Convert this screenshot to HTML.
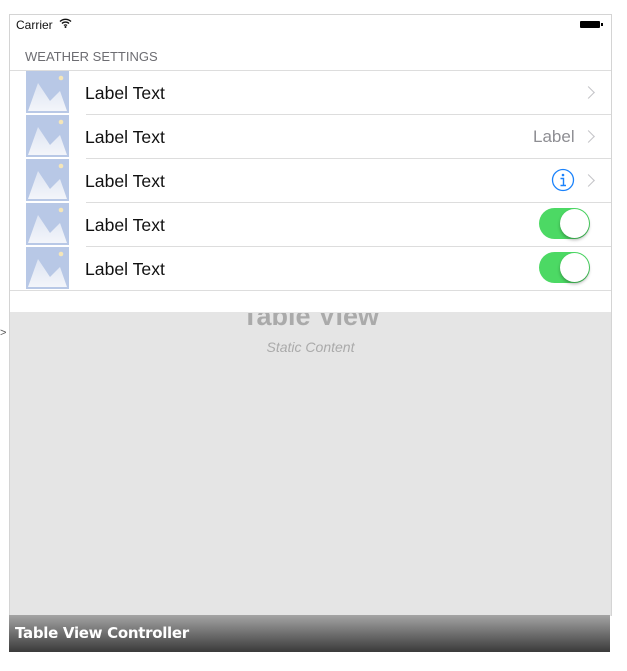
<!DOCTYPE html>
<html><head><style>
body{margin:0;width:627px;height:671px;background:#fff;position:relative;overflow:hidden;font-family:"Liberation Sans",sans-serif}
.frame{position:absolute;left:9px;top:14px;width:601px;height:601px;border:1px solid #d4d4d4;border-bottom:none;background:#e5e5e5;overflow:hidden}
.in{position:absolute;left:0;top:-1px;width:601px;height:602px}
.white{position:absolute;left:0;top:0;width:601px;height:298px;background:#fff}
.abs{position:absolute}
.sep{position:absolute;height:1px;background:#ddd;right:0}
.lbl{position:absolute;left:75px;font-size:17.6px;color:#111}
.img{position:absolute;left:16px;width:43px;height:42px}
.chev{position:absolute;left:574px;width:8px;height:8px;border-right:1.8px solid #c4c4c8;border-top:1.8px solid #c4c4c8;transform:rotate(45deg)}
.tog{position:absolute;left:529px;width:51px;height:31px;border-radius:16px;background:#4cd964}
.tog div{position:absolute;right:1px;top:1px;width:29px;height:29px;border-radius:50%;background:#fff;box-shadow:0 2px 3px rgba(0,0,0,.3)}
.bar{position:absolute;left:9px;top:615px;width:601px;height:37px;background:linear-gradient(#a4a4a4,#3a3a3a);color:#fff;font-weight:bold;font-size:15px;line-height:37px;padding-left:6px;box-sizing:border-box;font-family:"DejaVu Sans",sans-serif;letter-spacing:-0.3px}
</style></head><body>
<div class="frame"><div class="in">
<div class="white"></div>
<div class="abs" style="left:6px;top:4px;font-size:12px;color:#111">Carrier</div>
<svg class="abs" style="left:49px;top:4px" width="13" height="10" viewBox="0 0 13 10"><path d="M1 3.5a8 8 0 0 1 11 0M3 5.5a5 5 0 0 1 7 0M5 7.5a2.2 2.2 0 0 1 3 0" stroke="#111" stroke-width="1.4" fill="none"/><circle cx="6.5" cy="9" r="1" fill="#111"/></svg>
<div class="abs" style="left:570px;top:7px;width:20px;height:7px;background:#000;border-radius:1px"></div>
<div class="abs" style="left:591px;top:9px;width:2px;height:3px;background:#000"></div>
<div class="abs" style="left:15px;top:35px;font-size:13px;color:#6d6d72">WEATHER SETTINGS</div>
<div class="sep" style="left:0;top:56px"></div>
<div class="sep" style="left:76px;top:100px"></div>
<div class="sep" style="left:76px;top:144px"></div>
<div class="sep" style="left:76px;top:188px"></div>
<div class="sep" style="left:76px;top:232px"></div>
<div class="sep" style="left:0;top:276px"></div>
<svg width="0" height="0"><defs><linearGradient id="g" x1="0" y1="0" x2="0" y2="1"><stop offset="0" stop-color="#dde4f2"/><stop offset="1" stop-color="#f3f5fa"/></linearGradient></defs></svg>
<svg class="img" style="top:57px" viewBox="0 0 43 42"><rect width="43" height="42" fill="#b8c8e6"/><path d="M2 40L12 12L24 30L34 20L41 40Z" fill="url(#g)"/><circle cx="35" cy="7" r="2.3" fill="#f5e6b8"/></svg>
<svg class="img" style="top:101px" viewBox="0 0 43 42"><rect width="43" height="42" fill="#b8c8e6"/><path d="M2 40L12 12L24 30L34 20L41 40Z" fill="url(#g)"/><circle cx="35" cy="7" r="2.3" fill="#f5e6b8"/></svg>
<svg class="img" style="top:145px" viewBox="0 0 43 42"><rect width="43" height="42" fill="#b8c8e6"/><path d="M2 40L12 12L24 30L34 20L41 40Z" fill="url(#g)"/><circle cx="35" cy="7" r="2.3" fill="#f5e6b8"/></svg>
<svg class="img" style="top:189px" viewBox="0 0 43 42"><rect width="43" height="42" fill="#b8c8e6"/><path d="M2 40L12 12L24 30L34 20L41 40Z" fill="url(#g)"/><circle cx="35" cy="7" r="2.3" fill="#f5e6b8"/></svg>
<svg class="img" style="top:233px" viewBox="0 0 43 42"><rect width="43" height="42" fill="#b8c8e6"/><path d="M2 40L12 12L24 30L34 20L41 40Z" fill="url(#g)"/><circle cx="35" cy="7" r="2.3" fill="#f5e6b8"/></svg>
<div class="lbl" style="top:69px">Label Text</div>
<div class="lbl" style="top:113px">Label Text</div>
<div class="lbl" style="top:157px">Label Text</div>
<div class="lbl" style="top:201px">Label Text</div>
<div class="lbl" style="top:245px">Label Text</div>
<div class="chev" style="top:74px"></div>
<div class="abs" style="left:523px;top:113px;font-size:17px;color:#8e8e93">Label</div>
<div class="chev" style="top:118px"></div>
<svg class="abs" style="left:541px;top:154px" width="24" height="24" viewBox="0 0 24 24"><circle cx="12" cy="12" r="10.5" stroke="#1a82fb" stroke-width="1.3" fill="none"/><circle cx="12" cy="7" r="1.3" fill="#1a82fb"/><path d="M9.5 10.5h3v7M9.5 17.5h5.5" stroke="#1a82fb" stroke-width="1.4" fill="none"/></svg>
<div class="chev" style="top:162px"></div>
<div class="tog" style="top:194px"><div></div></div>
<div class="tog" style="top:238px"><div></div></div>
<div class="abs" style="left:0;width:601px;top:287px;text-align:center;font-size:27px;font-weight:bold;color:#aaa;clip-path:inset(12px 0 0 0)">Table View</div>
<div class="abs" style="left:0;width:601px;top:325px;text-align:center;font-size:14px;font-style:italic;color:#aaa">Static Content</div>
</div></div>
<div class="abs" style="left:0;top:327px;font-size:11px;color:#555">&gt;</div>
<div class="bar">Table View Controller</div>
</body></html>
